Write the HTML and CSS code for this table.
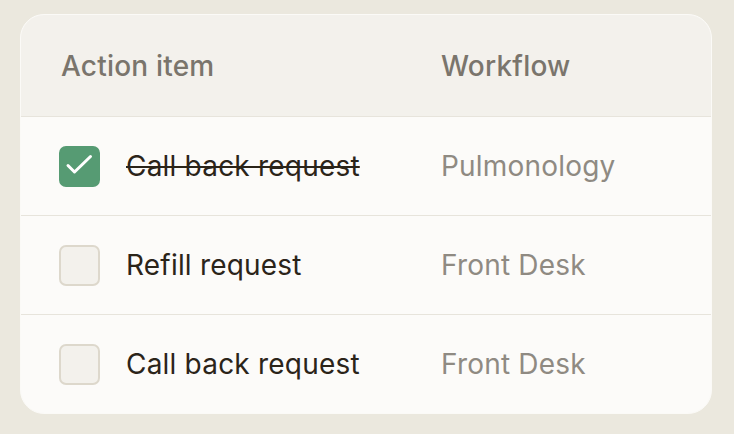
FILE: index.html
```html
<!DOCTYPE html>
<html>
<head>
<meta charset="utf-8">
<link rel="stylesheet" href="styles.css">
</head>
<body>
<div class="card">
  <div class="row head">
    <div class="col-item">Action item</div>
    <div class="col-flow">Workflow</div>
  </div>
  <div class="row">
    <div class="col-item">
      <span class="box checked">
        <svg width="37" height="37" viewBox="0 0 37 37"><path d="M7 17.5l6.5 6.5 16-15.5" fill="none" stroke="#fff" stroke-width="3" stroke-linecap="round" stroke-linejoin="round"/></svg>
      </span>
      <span class="label done">Call back request</span>
    </div>
    <div class="col-flow muted">Pulmonology</div>
  </div>
  <div class="row">
    <div class="col-item">
      <span class="box"></span>
      <span class="label">Refill request</span>
    </div>
    <div class="col-flow muted">Front Desk</div>
  </div>
  <div class="row">
    <div class="col-item">
      <span class="box"></span>
      <span class="label">Call back request</span>
    </div>
    <div class="col-flow muted">Front Desk</div>
  </div>
</div>
</body>
</html>
```
FILE: styles.css
```css
html, body { margin: 0; padding: 0; }
body {
  background: #ebe8de;
  font-family: Inter, "Noto Sans", sans-serif;
  padding: 14px 22px 0 20px;
  width: 734px;
  height: 434px;
  box-sizing: border-box;
}
.card {
  width: 692px;
  box-sizing: border-box;
  border: 1.5px solid #fbfaf7;
  border-radius: 24px;
  background: #fcfbf9;
  overflow: hidden;
}
.row {
  display: flex;
  align-items: center;
  height: 98px;
  border-top: 1px solid #e7e4dc;
  font-size: 28px;
  letter-spacing: 0.2px;
}
.row.head {
  height: 101px;
  border-top: none;
  background: #f3f1ec;
  color: #7a756c;
  font-weight: 500;
}
.col-item {
  box-sizing: border-box;
  width: 420px;
  padding-left: 38px;
  display: flex;
  align-items: center;
  gap: 26px;
}
.head .col-item { padding-left: 40px; }
.col-flow {
  flex: 1;
}
.muted { color: #8f8a82; }
.label {
  color: #2b2419;
}
.label.done {
  text-decoration: line-through;
  text-decoration-thickness: 2px;
}
.box {
  width: 41px;
  height: 41px;
  box-sizing: border-box;
  border-radius: 7px;
  border: 2px solid #ddd8cc;
  background: #f3f1ec;
  display: flex;
  align-items: center;
  justify-content: center;
  flex: none;
}
.box.checked {
  background: #569b73;
  border-color: #569b73;
}
```
